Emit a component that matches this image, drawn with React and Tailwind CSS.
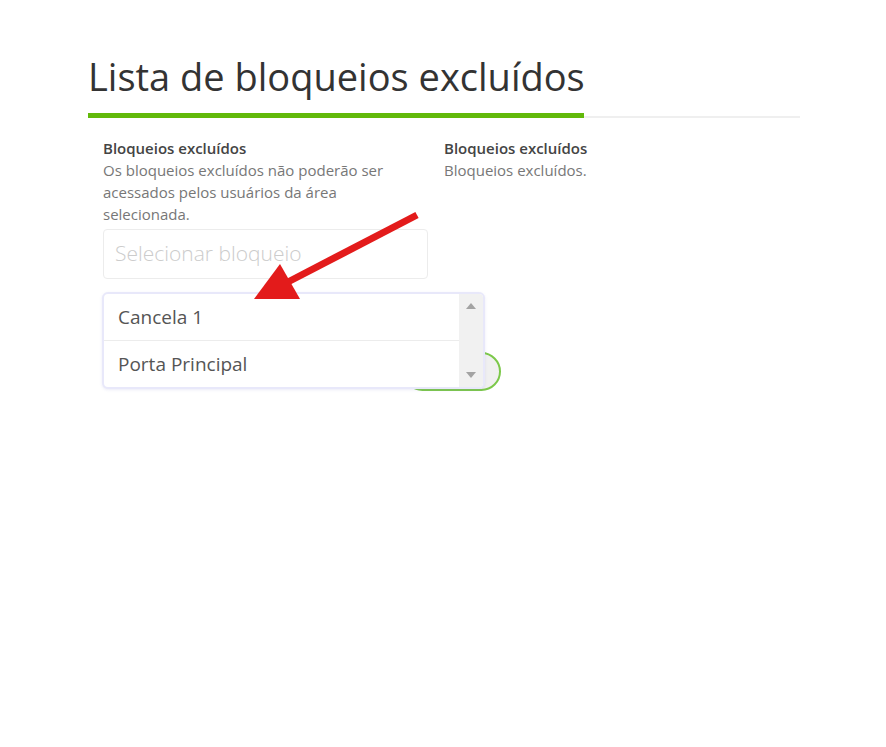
import React from 'react'

const FONT = { fontFamily: '"Open Sans", "Noto Sans", sans-serif' }

const OPTIONS = ['Cancela 1', 'Porta Principal']

function Arrow() {
  // red annotation arrow drawn over the screenshot
  return (
    <svg className="absolute left-0 top-0 pointer-events-none z-30" width="886" height="747" viewBox="0 0 886 747">
      <line x1="417" y1="215" x2="286" y2="283" stroke="#e31b1b" strokeWidth="7" />
      <polygon points="254,299 280,264 300,299" fill="#e31b1b" />
    </svg>
  )
}

function BlockSelect() {
  return (
    <div className="relative">
      <div className="w-[325px] h-[50px] border border-[#ececec] rounded-[4px] flex items-center pl-[11px] text-[21px] text-[#cccccc] font-light">
        Selecionar bloqueio
      </div>

      {/* toggle partly hidden behind the open list */}
      <div className="absolute left-[300px] top-[123px] w-[98px] h-[39px] rounded-full border-2 border-[#7cc84a] bg-[#f0f0f0] z-0"></div>

      {/* open list */}
      <div className="absolute left-[-1px] top-[63px] w-[383px] h-[97px] bg-white border-2 border-[#e8e8fa] rounded-[6px] shadow-[0_1px_3px_rgba(120,120,200,0.15)] flex overflow-hidden z-10">
        <ul className="flex-1">
          {OPTIONS.map((o, i) => (
            <li
              key={o}
              className={`h-[47px] flex items-center pl-[14px] text-[19px] text-[#555555] ${i === 0 ? 'border-b border-[#ececec]' : ''}`}
            >
              {o}
            </li>
          ))}
        </ul>
        <div className="w-[24px] bg-[#f1f1f1] flex flex-col items-center justify-between py-[9px]">
          <span className="w-0 h-0 border-l-[5px] border-r-[5px] border-b-[6px] border-l-transparent border-r-transparent border-b-[#a3a3a3]"></span>
          <span className="w-0 h-0 border-l-[5px] border-r-[5px] border-t-[6px] border-l-transparent border-r-transparent border-t-[#a3a3a3]"></span>
        </div>
      </div>
    </div>
  )
}

export default function App() {
  return (
    <div className="relative w-[886px] h-[747px] bg-white overflow-hidden" style={FONT}>
      <div className="pl-[88px] pt-[50px] w-[800px]">
        <div className="relative">
          <h1 className="text-[38px] leading-[52px] text-[#333333] font-normal">
            Lista de bloqueios excluídos
          </h1>
          <div className="mt-[14px] h-[2px] bg-[#efefef] w-[712px]"></div>
          <div className="absolute left-0 bottom-0 h-[5px] w-[496px] bg-[#62b90a]"></div>
        </div>

        <div className="pl-[15px] pt-[19px] flex gap-[16px]">
          <div className="w-[325px]">
            <div className="text-[15px] leading-[22px] font-semibold text-[#444444]">Bloqueios excluídos</div>
            <p className="w-[300px] text-[15px] leading-[22px] text-[#777777]">
              Os bloqueios excluídos não poderão ser acessados pelos usuários da área selecionada.
            </p>
            <div className="mt-[4px]">
              <BlockSelect />
            </div>
          </div>
          <div>
            <div className="text-[15px] leading-[22px] font-semibold text-[#444444]">Bloqueios excluídos</div>
            <p className="text-[15px] leading-[22px] text-[#777777]">Bloqueios excluídos.</p>
          </div>
        </div>
      </div>
      <Arrow />
    </div>
  )
}
